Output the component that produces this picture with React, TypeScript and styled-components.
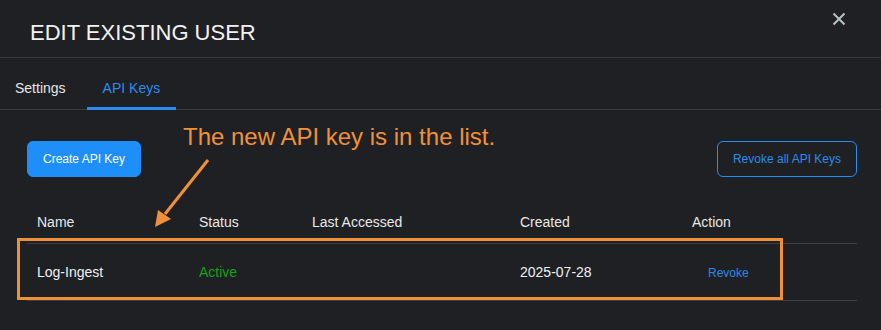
import React from "react";
import styled, { createGlobalStyle } from "styled-components";

const GlobalStyle = createGlobalStyle`
  * { box-sizing: border-box; }
  html, body {
    margin: 0;
    padding: 0;
    background: #1f2023;
    font-family: "Liberation Sans", Arial, sans-serif;
  }
`;

const Modal = styled.div`
  position: relative;
  width: 881px;
  height: 330px;
  background: #1f2023;
  overflow: hidden;
`;

const Header = styled.div`
  height: 58px;
  padding: 22px 30px 0;
  border-bottom: 1px solid #3a3b3e;
`;

const Title = styled.h1`
  margin: 0;
  font-size: 22px;
  line-height: 22px;
  font-weight: 400;
  color: #f2f2f2;
`;

const CloseButton = styled.button`
  position: absolute;
  top: 11px;
  right: 35px;
  width: 15px;
  height: 15px;
  padding: 0;
  border: 0;
  background: none;
  display: flex;
  align-items: center;
  justify-content: center;
  cursor: pointer;
`;

const TabBar = styled.div`
  display: flex;
  gap: 5px;
  height: 52px;
  padding-left: 0;
  border-bottom: 1px solid #3a3b3e;
`;

const Tab = styled.div<{ $active?: boolean }>`
  height: 52px;
  margin-bottom: -1px;
  padding: 23px 16px 0;
  font-size: 14px;
  line-height: 14px;
  color: ${(p) => (p.$active ? "#2a8cf0" : "#e6e6e6")};
  border-bottom: 3px solid ${(p) => (p.$active ? "#2a8cf0" : "transparent")};

  &:first-child {
    margin-left: -1px;
  }
`;

const Content = styled.div`
  padding: 31px 24px 0 27px;
`;

const Toolbar = styled.div`
  display: flex;
  justify-content: space-between;
  align-items: center;
`;

const Button = styled.button<{ $outline?: boolean }>`
  height: 36px;
  padding: 0 15px;
  border-radius: 6px;
  font-family: inherit;
  font-size: 12px;
  cursor: pointer;
  border: 1px solid #1e8ef8;
  background: ${(p) => (p.$outline ? "transparent" : "#1e8ef8")};
  color: ${(p) => (p.$outline ? "#2a8cf0" : "#ffffff")};
`;

const Table = styled.div`
  margin-top: 24px;
`;

const Row = styled.div<{ $head?: boolean }>`
  display: grid;
  grid-template-columns: 162px 113px 208px 172px 1fr;
  align-items: center;
  height: ${(p) => (p.$head ? "43px" : "57px")};
  border-bottom: 1px solid #3d3e41;
  font-size: 14px;
  color: ${(p) => (p.$head ? "#e8e8e8" : "#f0f0f0")};
`;

const Cell = styled.div<{ $tone?: "ok" }>`
  padding-left: 10px;
  color: ${(p) => (p.$tone === "ok" ? "#16a016" : "inherit")};
`;

const LinkButton = styled.button`
  margin-left: 16px;
  margin-top: -3px;
  padding: 0;
  border: 0;
  background: none;
  font-family: inherit;
  font-size: 12px;
  color: #2a88e8;
  cursor: pointer;
`;

const Callout = styled.div`
  position: absolute;
  left: 183px;
  top: 123px;
  font-size: 24px;
  color: #f0913a;
  white-space: nowrap;
`;

const Highlight = styled.div`
  position: absolute;
  left: 17px;
  top: 238px;
  width: 766px;
  height: 62px;
  border: 3px solid #f0913a;
  pointer-events: none;
`;

const ArrowLayer = styled.svg`
  position: absolute;
  left: 0;
  top: 0;
  pointer-events: none;
`;

const columns = ["Name", "Status", "Last Accessed", "Created", "Action"];

const keys = [{ name: "Log-Ingest", status: "Active", lastAccessed: "", created: "2025-07-28" }];

export default function App() {
  return (
    <Modal>
      <GlobalStyle />
      <Header>
        <Title>EDIT EXISTING USER</Title>
      </Header>
      <CloseButton aria-label="Close">
        <svg width="14" height="14" viewBox="0 0 14 14">
          <path d="M1.5 1.5 L12.5 12.5 M12.5 1.5 L1.5 12.5" stroke="#b9c1c5" strokeWidth="2" />
        </svg>
      </CloseButton>

      <TabBar>
        <Tab>Settings</Tab>
        <Tab $active>API Keys</Tab>
      </TabBar>

      <Content>
        <Toolbar>
          <Button>Create API Key</Button>
          <Button $outline>Revoke all API Keys</Button>
        </Toolbar>

        <Table>
          <Row $head>
            {columns.map((c) => (
              <Cell key={c}>{c}</Cell>
            ))}
          </Row>
          {keys.map((k) => (
            <Row key={k.name}>
              <Cell>{k.name}</Cell>
              <Cell $tone="ok">{k.status}</Cell>
              <Cell>{k.lastAccessed}</Cell>
              <Cell>{k.created}</Cell>
              <Cell>
                <LinkButton>Revoke</LinkButton>
              </Cell>
            </Row>
          ))}
        </Table>
      </Content>

      {/* annotation overlay */}
      <Callout>The new API key is in the list.</Callout>
      <ArrowLayer width="881" height="330">
        <line x1="208" y1="160" x2="165" y2="214" stroke="#f0913a" strokeWidth="3" />
        <polygon points="155,227 158,210 171,219" fill="#f0913a" />
      </ArrowLayer>
      <Highlight />
    </Modal>
  );
}
